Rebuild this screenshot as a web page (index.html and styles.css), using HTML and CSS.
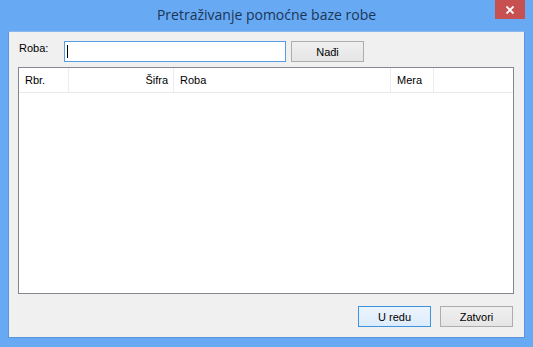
FILE: index.html
```html
<!DOCTYPE html>
<html>
<head>
<meta charset="utf-8">
<link rel="stylesheet" href="styles.css">
</head>
<body>
<div class="window">
  <div class="titlebar">
    <div class="title">Pretraživanje pomoćne baze robe</div>
    <div class="close">
      <svg width="10" height="10" viewBox="0 0 10 10"><path d="M1.5 1.5 L8.5 8.5 M8.5 1.5 L1.5 8.5" stroke="#fff" stroke-width="1.8" fill="none"/></svg>
    </div>
  </div>
  <div class="client">
    <div class="search-row">
      <label class="label">Roba:</label>
      <div class="input"><span class="caret"></span></div>
      <button class="btn">Nađi</button>
    </div>
    <div class="list">
      <div class="header">
        <div class="col c-rbr">Rbr.</div>
        <div class="col c-sifra">Šifra</div>
        <div class="col c-roba">Roba</div>
        <div class="col c-mera">Mera</div>
        <div class="col c-fill"></div>
      </div>
    </div>
    <div class="footer">
      <button class="btn default">U redu</button>
      <button class="btn">Zatvori</button>
    </div>
  </div>
</div>
</body>
</html>
```

FILE: styles.css
```css
html, body {
  margin: 0;
  padding: 0;
  background: #67a9f2;
}
.window {
  width: 533px;
  height: 347px;
  background: #67a9f2;
  display: flex;
  flex-direction: column;
  box-sizing: border-box;
}
.titlebar {
  height: 31px;
  position: relative;
  display: flex;
  justify-content: center;
  align-items: center;
}
.title {
  font-family: "Open Sans", "Noto Sans", sans-serif;
  font-size: 14px;
  color: #1b3658;
  margin-top: -2px;
}
.close {
  position: absolute;
  right: 8px;
  top: 0;
  width: 30px;
  height: 19px;
  background: #c75050;
  display: flex;
  align-items: center;
  justify-content: center;
}
.client {
  margin: 0 8px 9px 8px;
  flex: 1;
  background: #f0f0f0;
  border: 1px solid #5b96dc;
  border-top-color: #8ab8ee;
  box-sizing: border-box;
  display: flex;
  flex-direction: column;
  padding: 9px 11px 10px 9px;
  font-family: "Liberation Sans", Arial, sans-serif;
  font-size: 11px;
  color: #000;
}
.search-row {
  display: flex;
  align-items: center;
  height: 21px;
}
.label {
  width: 45px;
  padding-left: 1px;
  margin-top: -8px;
}
.input {
  width: 222px;
  height: 21px;
  box-sizing: border-box;
  border: 1px solid #569de5;
  background: #fff;
  position: relative;
}
.caret {
  position: absolute;
  left: 2px;
  top: 3px;
  width: 1px;
  height: 13px;
  background: #000;
}
.btn {
  font-family: "Liberation Sans", Arial, sans-serif;
  font-size: 11px;
  color: #000;
  width: 73px;
  height: 21px;
  box-sizing: border-box;
  border: 1px solid #adadad;
  background: linear-gradient(#f0f0f0, #e5e5e5);
  padding: 0;
  margin: 0;
}
.search-row .btn {
  margin-left: 5px;
}
.btn.default {
  border-color: #3c93e0;
  background: linear-gradient(#ecf4fc, #dcecfc);
}
.list {
  margin-top: 5px;
  width: 496px;
  height: 227px;
  box-sizing: border-box;
  background: #fff;
  border: 1px solid #828790;
}
.header {
  display: flex;
  height: 24px;
  border-bottom: 1px solid #eaeaea;
}
.col {
  box-sizing: border-box;
  border-right: 1px solid #ececec;
  display: flex;
  align-items: center;
  padding: 0 6px;
  white-space: nowrap;
}
.c-rbr { width: 50px; }
.c-sifra { width: 105px; justify-content: flex-end; padding-right: 5px; }
.c-roba { width: 217px; }
.c-mera { width: 43px; }
.c-fill { flex: 1; border-right: none; }
.footer {
  margin-top: 12px;
  display: flex;
  justify-content: flex-end;
  gap: 9px;
}
```
